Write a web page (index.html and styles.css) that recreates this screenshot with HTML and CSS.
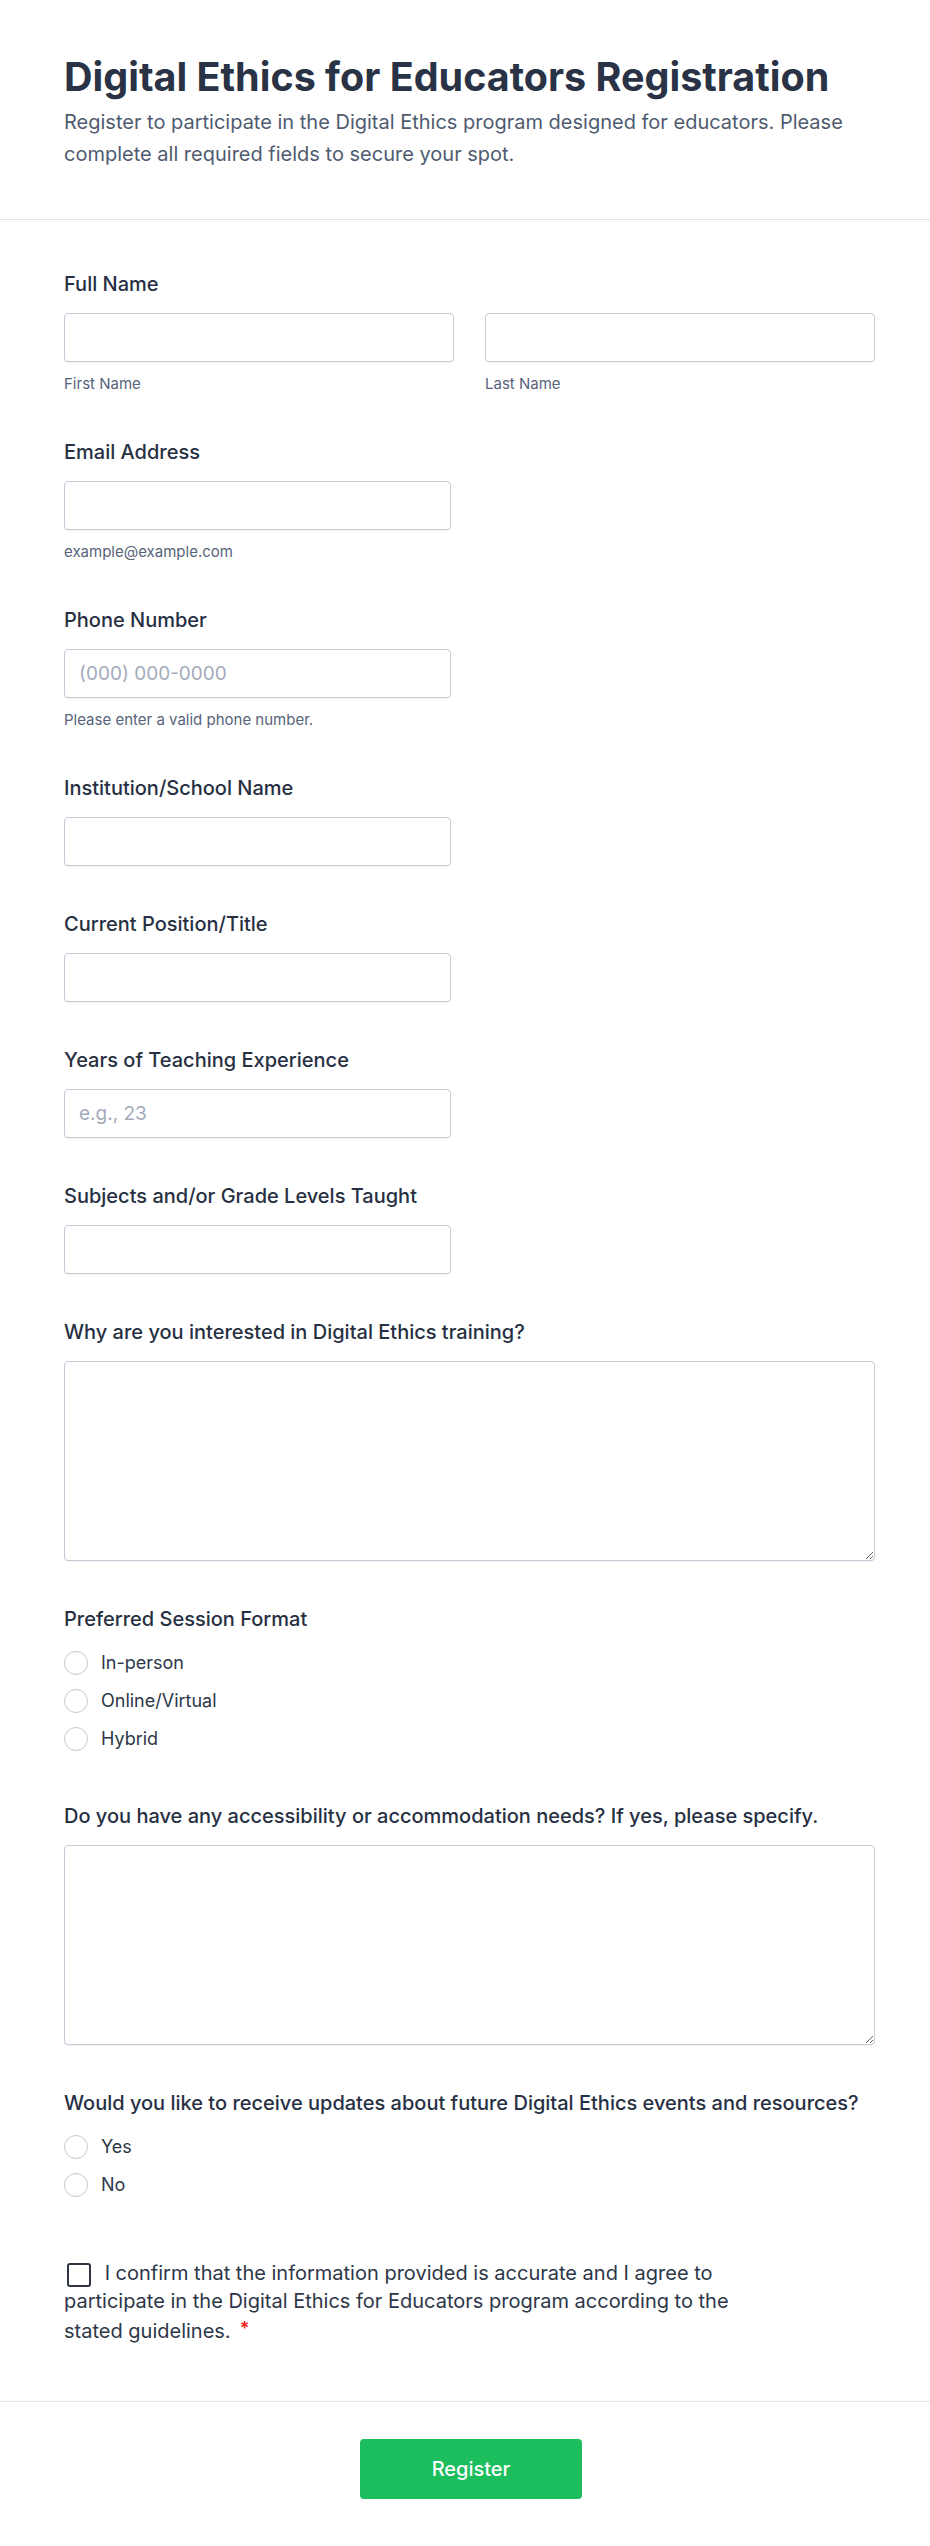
FILE: index.html
```html
<!DOCTYPE html>
<html lang="en">
<head>
<meta charset="utf-8">
<title>Digital Ethics for Educators Registration</title>
<link rel="stylesheet" href="styles.css">
</head>
<body>
<header class="form-header">
  <h1 class="form-title">Digital Ethics for Educators Registration</h1>
  <p class="form-desc">Register to participate in the Digital Ethics program designed for educators. Please complete all required fields to secure your spot.</p>
</header>

<form class="form-body">
  <div class="field">
    <label class="field-label">Full Name</label>
    <div class="name-row">
      <div class="name-col">
        <input class="text-input" type="text">
        <span class="sublabel">First Name</span>
      </div>
      <div class="name-col">
        <input class="text-input" type="text">
        <span class="sublabel">Last Name</span>
      </div>
    </div>
  </div>

  <div class="field">
    <label class="field-label">Email Address</label>
    <input class="text-input text-input--half" type="email">
    <span class="sublabel">example@example.com</span>
  </div>

  <div class="field">
    <label class="field-label">Phone Number</label>
    <input class="text-input text-input--half" type="tel" placeholder="(000) 000-0000">
    <span class="sublabel">Please enter a valid phone number.</span>
  </div>

  <div class="field">
    <label class="field-label">Institution/School Name</label>
    <input class="text-input text-input--half" type="text">
  </div>

  <div class="field">
    <label class="field-label">Current Position/Title</label>
    <input class="text-input text-input--half" type="text">
  </div>

  <div class="field">
    <label class="field-label">Years of Teaching Experience</label>
    <input class="text-input text-input--half" type="text" placeholder="e.g., 23">
  </div>

  <div class="field">
    <label class="field-label">Subjects and/or Grade Levels Taught</label>
    <input class="text-input text-input--half" type="text">
  </div>

  <div class="field">
    <label class="field-label">Why are you interested in Digital Ethics training?</label>
    <textarea class="text-area"></textarea>
  </div>

  <div class="field field--radio">
    <span class="field-label">Preferred Session Format</span>
    <div class="radio-list">
      <label class="radio-row"><input class="radio" type="radio" name="format"><span>In-person</span></label>
      <label class="radio-row"><input class="radio" type="radio" name="format"><span>Online/Virtual</span></label>
      <label class="radio-row"><input class="radio" type="radio" name="format"><span>Hybrid</span></label>
    </div>
  </div>

  <div class="field">
    <label class="field-label">Do you have any accessibility or accommodation needs? If yes, please specify.</label>
    <textarea class="text-area"></textarea>
  </div>

  <div class="field field--radio">
    <span class="field-label">Would you like to receive updates about future Digital Ethics events and resources?</span>
    <div class="radio-list">
      <label class="radio-row"><input class="radio" type="radio" name="updates"><span>Yes</span></label>
      <label class="radio-row"><input class="radio" type="radio" name="updates"><span>No</span></label>
    </div>
  </div>

  <p class="consent">
    <label><input class="checkbox" type="checkbox"> I confirm that the information provided is accurate and I agree to participate in the Digital Ethics for Educators program according to the stated guidelines.<span class="required">*</span></label>
  </p>
</form>

<footer class="form-footer">
  <button class="submit-btn" type="button">Register</button>
</footer>
</body>
</html>
```

FILE: styles.css
```css
* {
  box-sizing: border-box;
}

html, body {
  margin: 0;
  padding: 0;
  background: #ffffff;
}

body {
  font-family: Inter, "Noto Sans", "Liberation Sans", sans-serif;
  color: #2d3748;
}

.form-header {
  padding: 55px 55px 49px 64px;
  border-bottom: 1px solid #dfe3ea;
}

.form-title {
  margin: 0;
  font-size: 39.5px;
  line-height: 44px;
  font-weight: 700;
  color: #2a3346;
}

.form-desc {
  margin: 7px 0 0;
  font-size: 20px;
  line-height: 32px;
  color: #4f5b70;
}

.form-body {
  padding: 52px 55px 56px 64px;
}

.field {
  display: flex;
  flex-direction: column;
  align-items: flex-start;
  margin-bottom: 46px;
}

.field--radio {
  margin-bottom: 53px;
}

.field-label {
  font-size: 20px;
  line-height: 24px;
  font-weight: 500;
  color: #273043;
  margin-bottom: 17px;
}

.name-row {
  display: grid;
  grid-template-columns: 1fr 1fr;
  column-gap: 31px;
  width: 100%;
}

.name-col {
  display: flex;
  flex-direction: column;
}

.text-input {
  width: 100%;
  height: 49px;
  padding: 0 14px;
  border: 1px solid #c7cbd7;
  border-radius: 4px;
  box-shadow: 0 1px 1px rgba(30, 40, 70, 0.06);
  font-family: inherit;
  font-size: 19px;
  color: #2d3748;
  background: #fff;
}

.text-input--half {
  width: 387px;
}

.text-input::placeholder {
  color: #a3abba;
}

.sublabel {
  margin-top: 12px;
  font-size: 15px;
  line-height: 20px;
  color: #57637a;
}

.text-area {
  width: 100%;
  height: 200px;
  padding: 12px 14px;
  border: 1px solid #c7cbd7;
  border-radius: 4px;
  box-shadow: 0 1px 1px rgba(30, 40, 70, 0.06);
  font-family: inherit;
  font-size: 18px;
  resize: vertical;
  background: #fff;
}

.radio-list {
  display: flex;
  flex-direction: column;
  gap: 14px;
  margin-top: 3px;
}

.radio-row {
  display: flex;
  align-items: center;
  gap: 13px;
  font-size: 18px;
  line-height: 24px;
  color: #2d3748;
}

.radio {
  appearance: none;
  -webkit-appearance: none;
  margin: 0;
  width: 24px;
  height: 24px;
  border: 1px solid #c3c8d4;
  border-radius: 50%;
  background: #fff;
}

.consent {
  margin: 62px 0 0;
  max-width: 690px;
  font-size: 20px;
  line-height: 28px;
  color: #2d3748;
}

.checkbox {
  appearance: none;
  -webkit-appearance: none;
  width: 24px;
  height: 24px;
  margin: 0 8px 0 3px;
  border: 2px solid #2f3540;
  border-radius: 3px;
  background: #fff;
  vertical-align: middle;
}

.required {
  margin-left: 9px;
  color: #f01c1c;
  font-weight: 600;
  font-size: 18px;
  vertical-align: 3px;
}

.form-footer {
  display: flex;
  justify-content: center;
  padding: 37px 52px 48px 64px;
  border-top: 1px solid #e3e5ec;
}

.submit-btn {
  width: 222px;
  height: 60px;
  border: none;
  border-radius: 4px;
  background: #1bbd5c;
  color: #ffffff;
  font-family: inherit;
  font-size: 20px;
  font-weight: 500;
}
```
